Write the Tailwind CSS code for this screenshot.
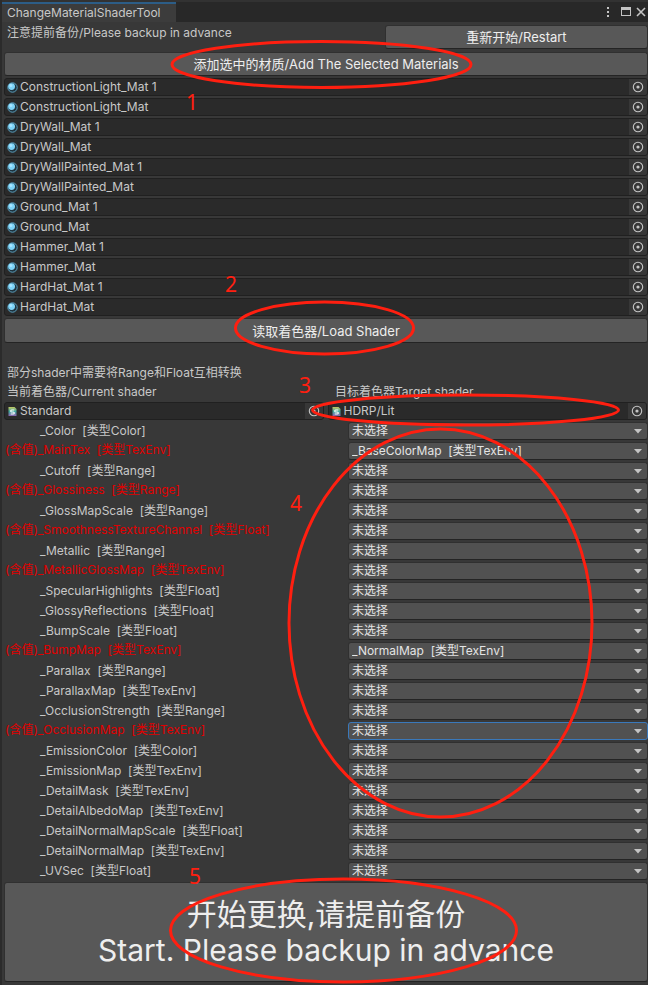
<!DOCTYPE html>
<html lang="zh-CN">
<head>
<meta charset="utf-8">
<meta name="viewport" content="width=device-width, initial-scale=1">
<title>ChangeMaterialShaderTool</title>
<script src="https://cdn.jsdelivr.net/npm/@tailwindcss/browser@4"></script>
</head>
<body class="bg-[#383838] font-['Inter','Noto_Sans_CJK_SC',sans-serif] text-[12px] leading-4 text-[#c8c8c8]">
<div class="relative min-h-screen border-l-2 border-[#2b2b2b] whitespace-nowrap">

  <header class="flex h-[22px] items-end justify-between bg-[#282828] border-t-2 border-t-[#323232]">
    <h1 class="flex h-5 w-[174px] items-center border-t-2 border-[#2c5d87] bg-[#3c3c3c] pl-[5px] font-normal">ChangeMaterialShaderTool</h1>
    <div class="flex h-5 items-center gap-2 pr-px">
      <button aria-label="Menu" class="block"><svg class="block" width="8" height="14" viewBox="0 0 8 14" fill="#c4c4c4"><path d="M2 2h2v2H2zM2 6h2v2H2zM2 10h2v2H2z"/></svg></button>
      <button aria-label="Maximize" class="block"><svg class="block" width="10" height="14" viewBox="0 0 10 14"><rect x=".5" y="2.5" width="9" height="8" fill="none" stroke="#c4c4c4"/><path d="M0 2h10v3H0z" fill="#c4c4c4"/></svg></button>
      <button aria-label="Close" class="-ml-1 block"><svg class="block" width="12" height="14" viewBox="0 0 12 14"><path d="M2 3l8 8M10 3l-8 8" stroke="#c4c4c4" stroke-width="1.6"/></svg></button>
    </div>
  </header>

  <main class="pl-0.5">
    <div class="flex justify-between pt-[3px]">
      <p class="w-3/5 pl-[3px]">注意提前备份/Please backup in advance</p>
      <button class="h-6 w-[263px] shrink-0 rounded-[3px] border border-b-[#242424] border-[#303030] bg-[#585858] text-[13px] text-[#eeeeee]">重新开始/Restart</button>
    </div>
    <button class="mt-[3px] block h-6 w-full rounded-[3px] border border-b-[#242424] border-[#303030] bg-[#585858] text-[13px] text-[#eeeeee]">添加选中的材质/Add The Selected Materials</button>

    <ul id="materials" class="mt-0.5 flex flex-col gap-0.5"></ul>

    <button class="mt-0.5 block h-[25px] w-full rounded-[3px] border border-b-[#242424] border-[#303030] bg-[#585858] text-[13px] text-[#eeeeee]">读取着色器/Load Shader</button>

    <p class="mt-[22px] pl-[3px]">部分shader中需要将Range和Float互相转换</p>
    <div class="mt-[3px] grid grid-cols-2">
      <p class="pl-[3px]">当前着色器/Current shader</p>
      <p class="pl-[9px]">目标着色器Target shader</p>
    </div>
    <div id="shaders" class="mt-0.5 grid grid-cols-2 gap-1 pr-px"></div>

    <div id="properties" class="mt-px"></div>

    <button class="mt-px block h-[100px] w-full rounded-[3px] border border-b-[#242424] border-[#303030] bg-[#585858] text-[30px] leading-9 text-[#eeeeee]">开始更换,请提前备份<br>Start. Please backup in advance</button>
  </main>

  <svg class="pointer-events-none absolute top-0 -left-0.5" width="648" height="985" viewBox="0 0 648 985" fill="none">
    <g stroke="#ff1f10" stroke-width="3">
      <ellipse cx="321.500" cy="64.500" rx="149.500" ry="23"/>
      <ellipse cx="324.500" cy="328" rx="89" ry="26"/>
      <ellipse cx="465.500" cy="410" rx="153" ry="15"/>
      <ellipse cx="440.500" cy="623" rx="151.500" ry="194"/>
      <ellipse cx="343.500" cy="930.500" rx="173" ry="51.500"/>
    </g>
    <g class="font-['Noto_Sans',sans-serif] text-[21px]" fill="#ff1f10">
      <text x="186" y="110">1</text>
      <text x="225" y="292">2</text>
      <text x="299" y="393">3</text>
      <text x="290" y="511">4</text>
      <text x="189" y="884">5</text>
    </g>
  </svg>
</div>

<script>
const materialIcon = `<svg class="block shrink-0" width="11" height="11" viewBox="0 0 11 11"><circle cx="5.500" cy="5.500" r="4.700" fill="#20343f" stroke="#5a9fbe"/><circle cx="4.600" cy="4.600" r="3.400" fill="#7ed3f7"/><circle cx="3.800" cy="3.600" r="1.500" fill="#a9e5ff"/></svg>`;
const shaderIcon = `<svg class="block shrink-0" width="11" height="11" viewBox="0 0 11 11"><defs><linearGradient id="sg" x1="0" y1="0" x2="0" y2="1"><stop offset="0" stop-color="#c5c860"/><stop offset=".5" stop-color="#3fa9a0"/><stop offset="1" stop-color="#8d62ad"/></linearGradient></defs><path d="M1.500 1h6L9.500 3v7h-8z" fill="url(#sg)"/><path d="M7.300 4H4.700Q3.700 4 3.700 5T4.700 6H6.300Q7.300 6 7.300 7T6.300 8H3.700" fill="none" stroke="#fff" stroke-width="1.100"/></svg>`;
const pickIcon = `<svg class="block" width="12" height="12" viewBox="0 0 12 12"><circle cx="6" cy="6" r="4.700" fill="none" stroke="#c4c4c4" stroke-width="1.100"/><circle cx="6" cy="6" r="1.600" fill="#c4c4c4"/></svg>`;

const objectField = (name, icon) => `
  <span class="flex min-w-0 flex-1 items-center gap-0.5 pl-0.5">${icon}<span>${name}</span></span>
  <button aria-label="Select ${name}" class="flex h-4 w-[18px] items-center justify-center rounded-r-[2px] bg-[#373737]">${pickIcon}</button>`;

const names = ["ConstructionLight", "DryWall", "DryWallPainted", "Ground", "Hammer", "HardHat"];
document.getElementById("materials").innerHTML = names
  .flatMap(n => [n + "_Mat 1", n + "_Mat"])
  .map(n => `<li class="flex h-[18px] items-center rounded-[3px] border border-[#202020] bg-[#2a2a2a]">${objectField(n, materialIcon)}</li>`)
  .join("");

document.getElementById("shaders").innerHTML = ["Standard", "HDRP/Lit"]
  .map(n => `<div class="flex h-[18px] items-center rounded-[3px] border border-[#202020] bg-[#2a2a2a]">${objectField(n, shaderIcon)}</div>`)
  .join("");

// [property, type, holds a value, selected target]
const properties = [
  ["_Color", "Color"],
  ["_MainTex", "TexEnv", true, "_BaseColorMap\u00a0 [类型TexEnv]"],
  ["_Cutoff", "Range"],
  ["_Glossiness", "Range", true],
  ["_GlossMapScale", "Range"],
  ["_SmoothnessTextureChannel", "Float", true],
  ["_Metallic", "Range"],
  ["_MetallicGlossMap", "TexEnv", true],
  ["_SpecularHighlights", "Float"],
  ["_GlossyReflections", "Float"],
  ["_BumpScale", "Float"],
  ["_BumpMap", "TexEnv", true, "_NormalMap\u00a0 [类型TexEnv]"],
  ["_Parallax", "Range"],
  ["_ParallaxMap", "TexEnv"],
  ["_OcclusionStrength", "Range"],
  ["_OcclusionMap", "TexEnv", true],
  ["_EmissionColor", "Color"],
  ["_EmissionMap", "TexEnv"],
  ["_DetailMask", "TexEnv"],
  ["_DetailAlbedoMap", "TexEnv"],
  ["_DetailNormalMapScale", "Float"],
  ["_DetailNormalMap", "TexEnv"],
  ["_UVSec", "Float"],
];
document.getElementById("properties").innerHTML = properties.map(([name, type, used, target]) => {
  const labelClass = used ? "w-[344px] shrink-0 pb-0.5 pl-px text-[#e00000]" : "w-[344px] shrink-0 pl-9";
  const selectClass = name === "_OcclusionMap"
    ? "block h-[18px] w-full appearance-none rounded-[3px] border border-[#3a79bb] bg-[#515151] pl-[3px] text-[#e4e4e4]"
    : "block h-[18px] w-full appearance-none rounded-[3px] border border-b-[#242424] border-[#303030] bg-[#515151] pl-[3px] text-[#e4e4e4]";
  return `<div class="flex h-5 items-center">
    <label for="p${name}" class="${labelClass}">${used ? "(含值)" : ""}${name}&nbsp; [类型${type}]</label>
    <div class="relative flex-1">
      <select id="p${name}" class="${selectClass}"><option>${target || "未选择"}</option></select>
      <svg class="pointer-events-none absolute top-[7px] right-1.5" width="8" height="5" viewBox="0 0 8 5"><path d="M0 0h8L4 4.500z" fill="#c4c4c4"/></svg>
    </div>
  </div>`;
}).join("");
</script>
</body>
</html>
